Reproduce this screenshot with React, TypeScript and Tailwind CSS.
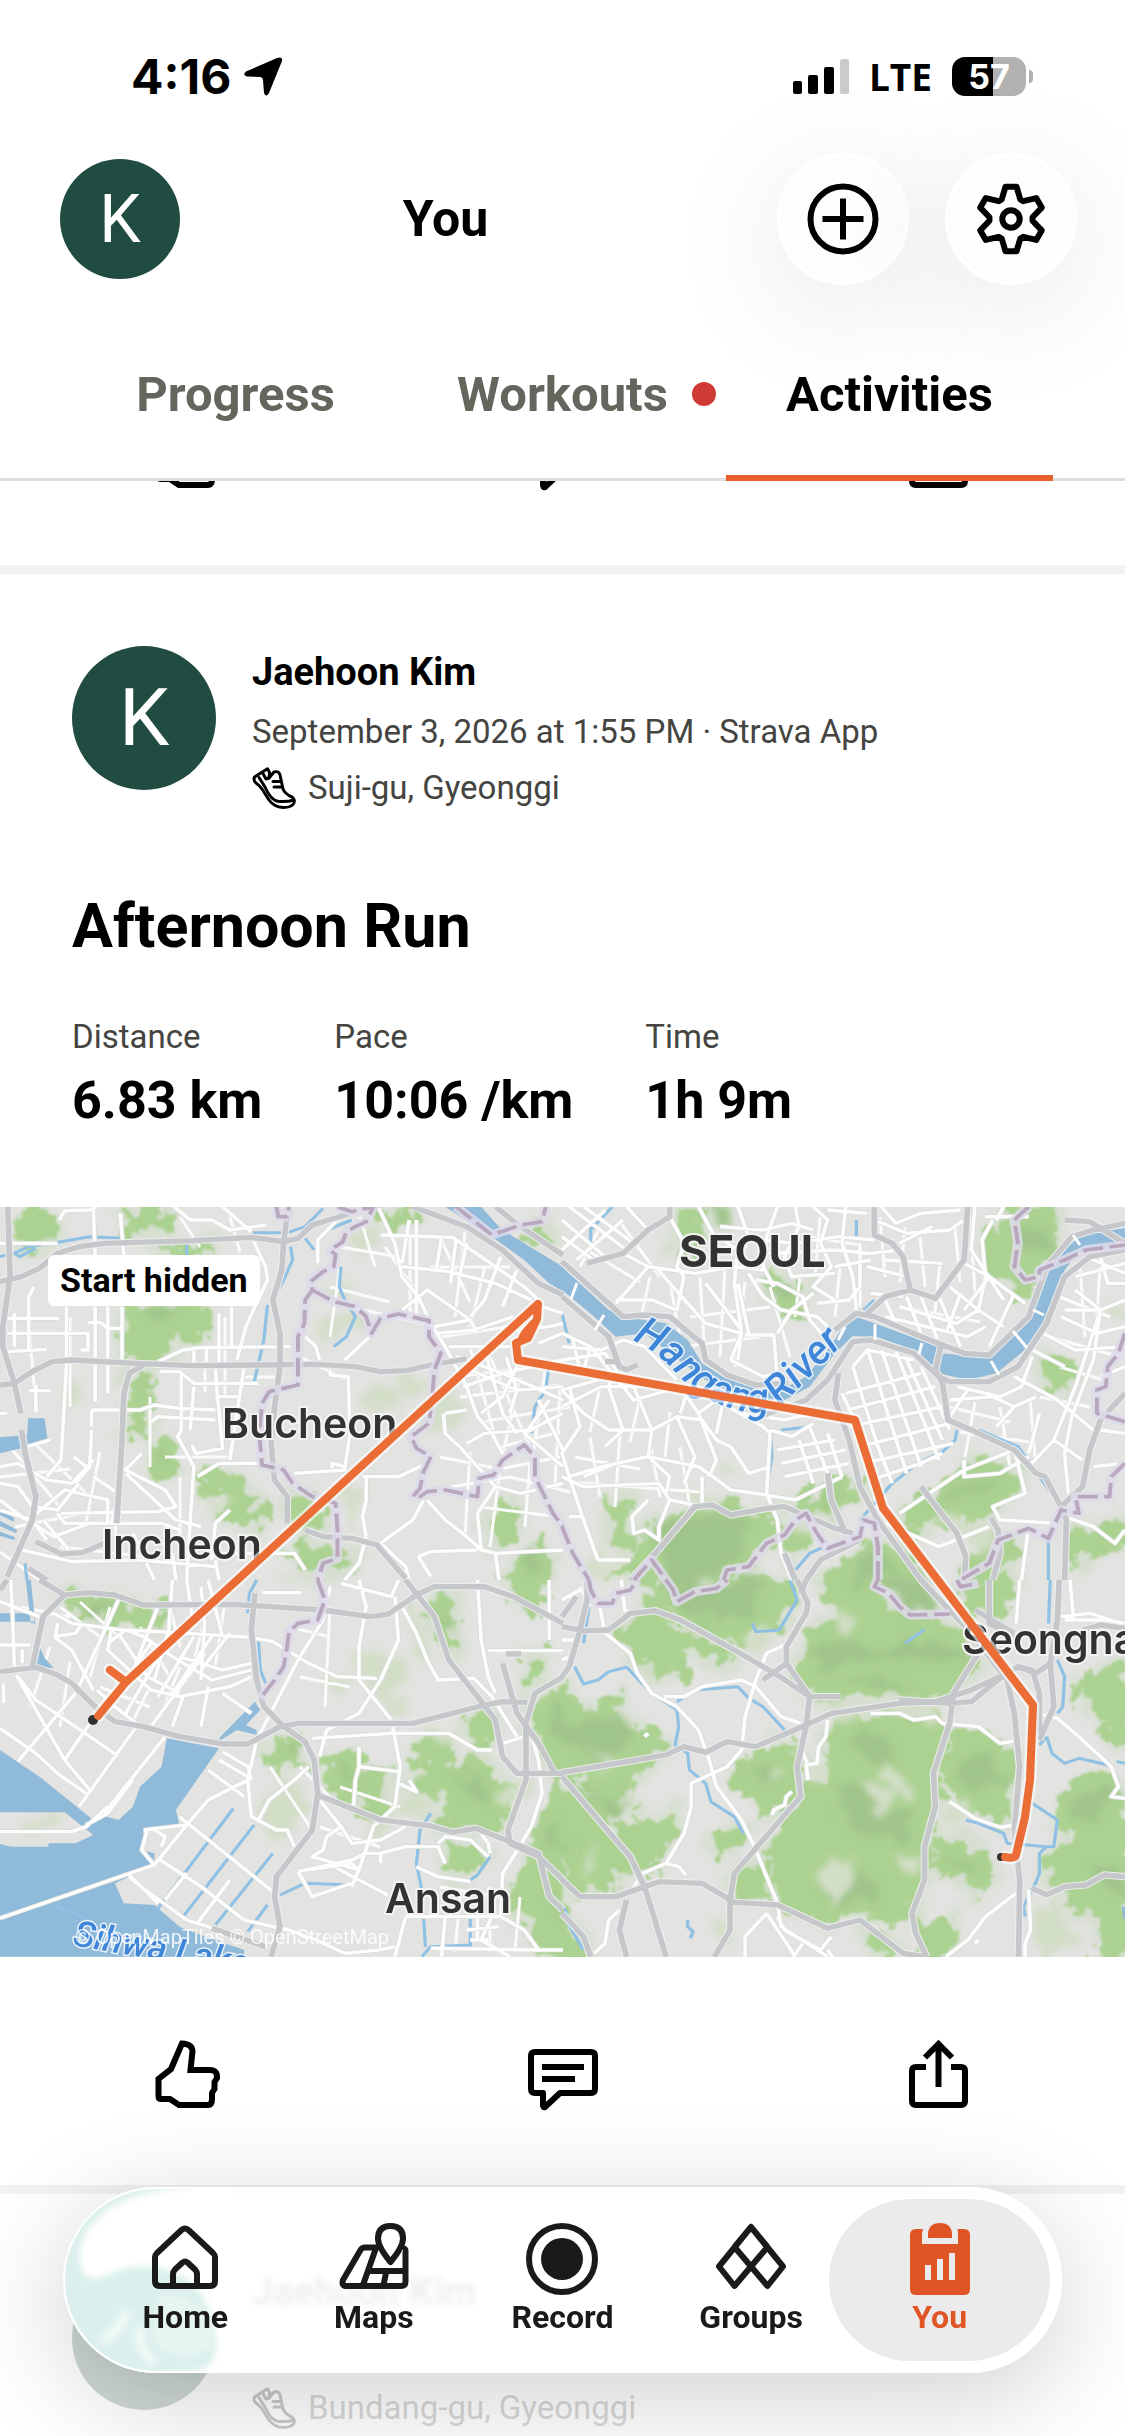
import React from 'react';
import { clsx, type ClassValue } from 'clsx';
import { twMerge } from 'tailwind-merge';

function cn(...inputs: ClassValue[]) {
  return twMerge(clsx(inputs));
}

/* ---------- icons ---------- */

const stroke = {
  fill: 'none',
  stroke: 'currentColor',
  strokeWidth: 6,
  strokeLinejoin: 'round' as const,
};

const LocationIcon = () => (
  <svg viewBox="0 0 40 40" className="w-10 h-10" fill="currentColor">
    <path d="M39 4 L26 36 Q23 41 21 36 L20 23 Q20 20.500 17.500 20 L4 19.500 Q-1 18 3 14.500 L34 1 Q40 -1 39 4Z" />
  </svg>
);

const SignalIcon = () => (
  <svg viewBox="0 0 56 36" className="w-14 h-9" fill="currentColor">
    <rect x="0" y="22" width="9" height="13" rx="2" />
    <rect x="15" y="16" width="10" height="19" rx="2" />
    <rect x="31" y="8" width="10" height="27" rx="2" />
    <rect x="47" y="0" width="9" height="35" rx="2" fill="#cbcbcb" />
  </svg>
);

const PlusCircleIcon = () => (
  <svg viewBox="0 0 72 72" className="w-[72px] h-[72px]" {...stroke}>
    <circle cx="36" cy="36" r="32.500" />
    <path d="M36 15.500V56.500M15.500 36H56.500" />
  </svg>
);

// one tooth, repeated every 60 degrees
const TOOTH = [[-9.3, -19.5], [-5.5, -32.3], [5.5, -32.3], [9.3, -19.5]];
const GEAR = Array.from({ length: 6 }, (_, i) => {
  const a = (i * Math.PI) / 3;
  return TOOTH.map(([x, y]) => `${36 + x * Math.cos(a) - y * Math.sin(a)},${36 + x * Math.sin(a) + y * Math.cos(a)}`);
}).flat().join(' ');

const GearIcon = () => (
  <svg viewBox="0 0 72 72" className="w-[72px] h-[72px]" {...stroke}>
    <polygon points={GEAR} />
    <circle cx="36" cy="36" r="8.700" />
  </svg>
);

const ThumbIcon = () => (
  <svg viewBox="0 0 72 72" className="w-[72px] h-[72px]" {...stroke}>
    <path d="M30 4.500 L19 30 L6.500 40 V57 Q6.500 60 9 60 H18 L27 66 H56 Q60 66 60 60 V54 L62.500 50 V43 L65 39 Q65.500 31 58 31 H38.500 L40.500 12 Q40 5 30 4.500Z" strokeLinejoin="miter" />
  </svg>
);

const CommentIcon = () => (
  <svg viewBox="0 0 72 72" className="w-[72px] h-[72px]" {...stroke}>
    <path d="M8 13 H64 Q68 13 68 17 V50 Q68 54 64 54 H33 L18 68 Q16 69 16 66 V54 H8 Q4 54 4 50 V17 Q4 13 8 13Z" />
    <path d="M15 28H57M15 40H48" />
  </svg>
);

const ShareIcon = () => (
  <svg viewBox="0 0 72 72" className="w-[72px] h-[72px]" {...stroke} strokeLinejoin="miter">
    <path d="M24 28 H14 Q10 28 10 32 V62 Q10 66 14 66 H59 Q63 66 63 62 V32 Q63 28 59 28 H49" />
    <path d="M36.500 5V48M23 18.500L36.500 5L50 18.500" />
  </svg>
);

const ShoeIcon = () => (
  <svg viewBox="0 0 44 42" className="w-11 h-[42px]" {...stroke} strokeWidth={3} strokeLinecap="round">
    <path d="M2.500 10 L15.500 1.800 L17.500 5.500 L17 11 L22 5 Q27 3.500 28 8 L31 22 Q33 27 40 30 Q43 32 42 36 Q40 40.500 31 40.500 Q22 40 17 33 L10 22 Q7 18 4 16 Q1 13 2.500 10Z" />
    <path d="M7 10.500 L13 20 Q19 34 27 34.500 Q36 35 42 33M11 6.500L14 12L17 11M21 14.500H28M22 20H29.500" />
  </svg>
);

const HomeIcon = () => (
  <svg viewBox="0 3 72 72" className="w-[72px] h-[72px]" {...stroke}>
    <path d="M32.500 10 Q36 7 39.500 10 L64 33 Q66 35 66 37 V61 Q66 66 61 66 H11 Q6 66 6 61 V37 Q6 35 8 33Z" />
    <path d="M24 66 V54 Q24 51.500 26 49.500 L33.500 42.500 Q36 40.500 38.500 42.500 L46 49.500 Q48 51.500 48 54 V66" />
  </svg>
);

const MapsIcon = () => (
  <svg viewBox="0 3 72 72" className="w-[72px] h-[72px]" {...stroke}>
    <path d="M40 27.500 H27 Q24 27.500 22.500 30 L5 60 Q3 66 9 66 H63 Q67.500 66 67.500 61.500 V31 Q67.500 28.500 65 28.500" />
    <path d="M38 28L25 65M32 51H67M48 53L45.500 65" />
    <path d="M52.500 42 Q40 27 40 18.500 Q40 6 52.500 6 Q65 6 65 18.500 Q65 27 52.500 42Z" fill="#fff" />
  </svg>
);

const RecordIcon = () => (
  <svg viewBox="0 3 72 72" className="w-[72px] h-[72px]" {...stroke}>
    <circle cx="36" cy="39" r="33" />
    <circle cx="36" cy="39" r="21" fill="currentColor" stroke="none" />
  </svg>
);

const GroupsIcon = () => (
  <svg viewBox="0 3 72 72" className="w-[72px] h-[72px]" {...stroke} strokeWidth={6}>
    <path d="M52.500 27 L36 7 L4 46.500 L19.500 66 L52.500 27M19.500 27 L36 7 L68 46.500 L52.500 66 L19.500 27" />
  </svg>
);

const YouIcon = () => (
  <svg viewBox="0 3 72 72" className="w-[72px] h-[72px]" fill="currentColor">
    <path d="M12 9 H19 Q18 12 18 15 V24 H54 V15 Q54 12 53.500 9 H60 Q66 9 66 15 V69 Q66 75 60 75 H12 Q6 75 6 69 V15 Q6 9 12 9Z" />
    <path d="M24 18 V15 Q24 3 36 3 Q48 3 48 15 V18Z" />
    <path d="M21 45H27V60H21ZM33 39H39V60H33ZM45 33H51V60H45Z" fill="#ebebeb" />
  </svg>
);

/* ---------- route map ---------- */

interface Tile {
  x: number;
  y: number;
  forest: string;
  shade: string;
  meadow: string;
  water: string;
  stream: string;
  street: string;
  highway: string;
  border: string;
}

// four vector tiles, each in its own 1568-wide grid
const TILES: Tile[] = [
  {
    x: 0,
    y: -7,
    forest:
      'M40 60L90 25 140 40 162 80 150 110 100 125 40 120ZM345 40L480 30 460 90 440 75 420 100 400 85 375 105 350 95 365 70ZM440 140L590 135 580 160 480 165ZM400 320L580 320 560 370 575 410 520 390 480 410 460 470 420 485 400 470 380 485 370 450 350 470 345 380 370 340ZM370 510L410 530 405 570 430 610 400 640 430 660 390 705 360 690 375 640 360 600ZM415 735L485 740 480 770 500 800 470 825 420 810ZM555 830L600 820 660 830 690 900 735 930 725 975 690 945 660 965 620 955 650 900 640 870 600 850 560 865ZM810 905L870 910 900 990 860 985 815 960ZM805 1050L860 1020 900 1070 980 1040 990 1080 940 1120 900 1080 880 1120 830 1100ZM1370 960L1400 905 1430 900 1425 980 1400 1030 1365 1000ZM1070 25L1175 40 1165 60 1120 60 1090 90ZM1470 85L1500 80 1545 100 1530 130 1490 110ZM1430 1100L1500 1070 1490 1040 1530 1030 1540 1080 1500 1140 1420 1130Z',
    shade: 'M400 340L500 330 480 370 420 380ZM380 540L400 560 390 600ZM430 740L480 745 460 760ZM1460 1100L1520 1080 1500 1130Z',
    meadow:
      'M980 110L1060 90 1010 165ZM860 370L990 330 1010 380 890 430ZM1000 560L1100 540 1090 620 1000 630ZM180 560L240 530 250 620 190 610ZM560 870L640 880 620 950ZM940 880L1000 860 980 1000ZM1200 570L1290 610 1240 720 1190 690ZM1090 520L1180 530 1120 640ZM890 250L970 240 960 300Z',
    water: 'M78 655H124L132 715 60 745 0 760V712L76 705ZM1240 20H1340L1390 80 1430 110 1568 200V275L1530 250 1460 180 1370 110ZM0 925L40 955 38 965 0 945ZM0 962L48 990 45 1000 0 978ZM0 995L42 1012 40 1020 0 1008Z',
    stream:
      'M0 170L40 160 80 140 170 125 250 110 340 115M40 160L55 170 100 145M705 98L800 98 850 80 900 25M810 140L815 180 790 240 770 280M745 315L735 420 720 490 708 545M950 200L945 260 960 300 990 350 965 410 930 440M850 115L875 150M520 135V165M1530 490L1520 570 1490 620 1480 700M910 90L980 60M70 1090L75 1140',
    street:
      'M0 130H160M165 60L180 32 250 30 270 20M260 20L265 165M335 40L345 165M20 355H165M20 400H245V450H225M40 340V440M95 260L80 290V450M20 455L130 448M185 320V500L170 780 130 830M245 368H280L300 385H340M265 320V605M255 630V680M300 320V580M255 630H390L430 615 500 625 600 630M255 690L250 800 210 850M340 320V480M80 572H140M100 555V635M440 485L510 450 560 443 810 440M445 515H500L540 550 720 550M505 520V690L495 710 540 800 530 960M540 560L530 690M600 590H670M610 340V490M645 320V440M700 110L740 200 745 240 710 320 685 380 660 480M680 500L660 640 640 780M420 665L440 650 600 660M600 500L605 580 620 745 545 760 535 735M540 440V495M575 440V495M350 820L430 900 490 960 560 980M395 760L350 810 460 870 490 920 440 935 170 940M550 830L610 790 740 790M640 930L600 970 590 1080M820 820L960 810 975 700 970 530 920 525V510M925 805V790L960 800M1010 830H1110L1190 790M1020 830V900L1010 950 1020 1010M850 410L880 440 890 480M960 480L1030 410M485 20L530 60 590 60 640 90 740 75M620 20L700 95M885 190V120L940 60M1055 25L1100 130 1120 230 1165 290 1200 370 1240 440 1300 560 1330 650 1370 700 1410 780M1060 105L1260 112 1340 170 1460 260 1500 300M1160 60V350M1140 60L1120 190M1120 200L1250 215 1380 250 1480 300M1230 110L1215 210M1270 120L1255 250M1300 130L1280 230M1395 170L1350 300 1310 350M1440 210L1400 320M1120 330L1190 270 1310 360 1330 400M1210 380L1310 360M1215 400L1320 390 1430 350M1250 440H1420M1270 470L1400 520 1568 600M1310 510L1440 570 1568 560M1290 560L1400 520 1568 480M1350 450L1400 640 1440 700M1440 500L1400 590 1340 640M1530 600L1470 690 1350 700 1300 730M1240 640L1300 630M1235 640L1240 700 1280 740 1380 860 1450 880 1568 850M1500 600L1568 750M1568 640L1460 700 1568 800M1180 900L1150 960 1060 1030M1190 900L1240 960 1300 1010 1340 1050 1380 1060 1568 1050M1165 1070L1200 1055 1330 1050M1165 1070L1200 1130M1380 860L1330 940 1340 1050M1380 1060L1390 1140M0 800L50 790 130 840 200 850 260 780M0 850L50 860 90 920 160 930 220 850M0 900L60 950 150 1010 250 970M80 960L180 870 300 900 300 970M205 770L240 800M260 830L330 880 310 970M60 1050L200 1085 380 1080 600 1100M160 940L180 970 330 970H450L500 990M370 1000L430 1140M480 1060L490 1140M530 960L520 1140M600 1080L610 1140M560 1060H820L850 1110M0 930L90 960 130 1020 M120 960L200 1060M0 640H20M60 745L140 720M1060 1030L1130 1100 1140 1140M1020 1010L1000 1090 960 1140M1440 390L1530 380 1568 370M1510 320L1568 340M1500 430L1568 400M1410 470L1440 570 1420 640',
    highway:
      'M22 20L28 230 8 380V440L40 550 58 640M60 690L70 760 100 890 90 960 20 1130M0 245L60 230 110 205 160 160 220 140 290 130 540 122 700 112 790 125 830 115 870 75 970 42M0 555L40 550 90 515 145 485 200 480 380 490 540 497 880 493 990 500 1060 515 1130 512 1200 495 1300 477M400 495L360 520 345 580 340 720 325 970M800 50L790 125 785 210 760 300 780 400 780 500 765 620 755 730 765 840 800 890V970M850 990L900 1010 980 1015 1050 1035 1130 1135M100 1025L170 1062 230 1058 290 1030M1150 20L1300 80 1400 150 1500 250 1568 285M1380 20L1450 80 1568 165M80 1105L130 1140',
    border:
      'M770 20L775 50 800 50 805 20M940 20L980 35 1040 20 1020 65 990 80 965 95 955 125 920 150 935 165 930 200 900 215 865 245 870 270 850 300 848 370 830 410V555L750 575 730 610 722 700 730 795 790 810 815 850 870 890 935 910 940 990V1075L900 1090 885 1140M870 270L930 305 990 320 1020 350 1035 400 1060 355 1110 342 1195 362V410L1228 460 1210 510 1205 580 1195 670 1145 710 1160 745 1200 770 1178 820 1170 865 1150 890 1170 890 1190 875 1240 870 1330 890 1335 835 1375 825 1400 780 1460 735 1490 770V830L1540 940 1568 980M1270 20L1370 105 1450 75 1510 65 1520 20',
  },
  {
    x: 562,
    y: -7,
    forest:
      'M310 40L400 25 380 100 365 180 320 100ZM580 235L630 240 640 280 680 240 650 300 665 350 620 340 590 290ZM1240 60L1290 25 1360 50 1380 110 1330 200 1290 290 1240 240 1190 200 1190 130 1210 80ZM1355 490L1395 487 1430 520 1415 580 1340 545ZM150 900L200 900 180 950 205 990 190 1060 130 1020ZM650 900L760 850 820 840 840 880 770 920 760 970 690 920 640 930ZM945 950L1100 820 1140 790 1270 800 1275 870 1180 940 1120 950 1010 990ZM220 1000L330 960 430 910 600 940 620 1000 560 1040 480 1140H130L210 1090ZM600 1010L650 990 680 1060 620 1060ZM760 1140L800 1060 860 1040 940 1040 1010 1140ZM1430 990L1470 1000 1530 960 1568 980V1030L1480 1060 1430 1090ZM1120 1080L1200 1010 1280 1000 1230 1100 1200 1140H1120ZM1240 20H1350L1390 60 1300 50Z',
    shade: 'M400 20H460L470 70 410 70ZM230 1010L420 960 560 960 500 1060 400 1140H300ZM1280 60L1350 70 1340 160 1280 150ZM1020 900L1130 840 1240 830 1180 880ZM690 890L780 860 760 920ZM800 1090L900 1060 960 1140H800ZM590 240L620 250 630 310 600 290Z',
    meadow: 'M330 860L420 870 430 920 360 910ZM440 770L480 800 460 860ZM1030 980L1180 950 1200 1040 1110 1010ZM620 980L700 960 740 1030ZM1530 310L1568 320V370L1530 350ZM80 1080L130 1050 130 1140H80ZM280 130L330 120 300 180Z',
    water:
      'M0 200L40 240 130 330 200 355 290 370 350 420 390 490 450 530 560 570 600 575 680 530 740 450 790 370 820 350 870 370 1050 440 1060 460 1190 475 1250 400 1320 320 1340 240 1380 170 1450 100 1568 85V140L1440 155 1400 210 1370 310 1300 440 1210 520 1130 540 1050 520 990 455 880 412 810 408 760 460 690 560 620 600 520 600 400 540 300 460 230 400 150 410 90 350 0 270Z',
    stream:
      'M80 60V150M140 20L80 90M580 690L585 770 570 860M1100 690L1095 720 1060 755 990 790 920 850 830 960M1160 690L1270 740 1390 920M1355 1020V1140M0 340L20 430M650 1110L690 1060 730 1040M820 60V120M610 690L690 680M870 300L840 330',
    street:
      'M0 60L120 170M20 20L180 150M60 20L200 130M0 110L100 190M0 150L120 30M40 180L170 60M170 160L240 200 370 220 480 200 560 210M180 20L240 90M300 50L340 130 320 200 340 230M380 20L420 100 490 150 480 250 500 400 490 480M490 20L520 110 500 170M240 200L150 310 M260 200L350 310 400 370 500 400M340 230L320 330 250 300 150 300M400 250L500 390M440 80L560 90 640 70 700 90M600 20L570 110 560 200 590 260M650 20L660 80 620 170 640 230 760 220M700 20L740 60 720 130 750 200 700 260 760 300M560 120L650 130 770 110 870 120M570 160L760 150 860 160 940 150M790 20L780 130 810 230 820 330M830 130V260L800 300 710 310M740 30L850 40M860 180L760 200M850 200L960 230M520 220L560 290 610 330 710 350 750 390M540 240L600 250 670 290 690 360 740 420M500 400L470 480 560 530 600 520M510 405H590L600 540M600 400L640 330 700 280M490 250L520 400M870 60L960 100 1080 90 1120 60M890 20L930 70 1000 40 1110 30M940 130L1030 80M900 180L1060 190M860 280L950 290M900 300L930 370M960 290L1000 400M1000 290L1050 430M1050 290L1110 440M900 350L1130 410 1180 380M940 320L1100 370 1160 330M1080 260L1160 330 1230 380M1120 190L1190 230 1290 310M1150 20L1140 150 1230 300M1180 50H1300M1200 60L1170 120 1180 230 1160 330M1110 280L1070 400M1190 230L1120 330M1260 280L1190 440M1230 20L1210 60M1460 170L1568 220M1430 230L1568 190M1500 170L1520 250 1568 250M1430 270L1500 330 1480 480M1400 330L1500 330 1568 300M1390 350L1490 400 1568 380M1340 400L1430 450 1568 440M1310 450L1400 500M1260 530L1380 600 1490 700M1310 470L1280 560 1220 590 1100 560M1430 560L1370 720 1300 800M1480 480L1420 650 1400 760 1410 880M1500 330L1430 560M1568 500L1500 530M1080 600L1200 590 1260 620 1320 590M1130 570L1080 650M1260 620L1210 680M1330 640L1300 760M1370 720L1450 780M1500 690L1568 700M1480 800L1568 790M810 500L850 450 980 480M790 580L1000 520M795 630L1040 560M800 680L1060 620M830 740L1080 670M840 790L1090 730M860 840L1000 790 1060 760M850 445L960 820M890 450L1000 800M930 455L1050 780M960 480L1060 720M1000 500L1080 690M810 500L880 740 920 850M780 580L850 740M940 940L1120 810 1260 750 1290 880 1200 920 1220 960 1380 970M1120 780V830L1220 820 1300 770M0 440L110 450 170 420 230 440 320 540M0 480L120 460 150 510 130 560M0 400L80 440 60 510M30 420L50 510M80 440L200 600 300 570M100 540L0 570 60 640 130 690 250 690 320 650 390 660 430 720 470 740 520 820 580 800M0 620L110 560 230 560M20 560L50 680 0 760 20 830 110 800 240 770 380 800 420 830 470 870 540 880 650 900 780 830M130 560L170 690 120 740M200 560L250 690 240 770M110 800L20 830 60 960 100 1080M0 830L60 860 270 850 300 900 270 980 270 1020 230 990 200 1000 195 950 240 900M60 830L150 790M240 770L300 830 290 880M320 650L370 770 340 850M330 560L380 640 430 600 560 680 580 700M350 570L330 640M380 640L430 780 410 830M450 600L430 700M500 640L620 660 700 640M580 690L570 880 600 960 610 1060 640 1140M580 690L640 710 700 670M600 750L760 720M610 790L790 750M620 830L800 790M690 680L740 820M660 720L700 850M740 700L780 830M390 830V910M20 950H60M100 1080H190M300 900L390 920M1568 990L1540 1030 1480 980 1400 950M900 970L1050 1040 1190 980M1300 980L1290 1060 1280 1140',
    highway:
      'M0 185L140 320 170 350 230 345 300 350 390 430 400 480 460 525 540 555 630 550M0 290L130 410 160 500 180 510 210 495M120 485H150M550 650L680 600 740 540 810 425 860 420 980 460 1050 530 1080 545 1190 545 1270 500 1350 370 1400 230 1470 170 1568 150M760 390L820 340 870 350 1000 410 1120 460 1190 465 1300 350 1350 200 1420 110 1480 90 1568 70M70 190L170 160 240 90 300 50V20M870 20V105L920 130 950 170 970 270 1040 295 1120 180 1130 20M970 270L900 290 850 340M1055 440L1040 510 1060 550 1075 660 1140 690 1260 750 1320 820 1345 830 1390 920 1405 960 1400 1140M1390 920L1450 860 1470 750 1500 660 1568 580M770 520L760 600 800 720 830 860 880 960 1000 1140M740 820L750 900 790 1000M190 1140L260 1060 370 920 420 915 470 945 570 925 620 920 760 985 810 1000M1000 860L1100 1000 1125 1070 1120 1140M1195 955L1215 990 1220 1060 1200 1140M680 1140L720 1080 830 1020M620 1060L650 1140M1400 60L1470 65 1568 130',
    border:
      'M1300 20L1260 60 1270 130 1260 200 1290 240 1330 230V210L1400 180 1460 150 1568 135M1568 400L1550 460 1520 500 1515 560 1490 570V640L1568 665M1568 790L1530 830 1525 890 1430 890 1440 940 1390 930 1355 1015 1300 985 1215 1020 1190 1090 1110 1140M880 1140V1040L870 970 840 960 830 1010 740 1045 710 1000 680 940 650 960 620 1005 570 1030 520 1100 460 1110 450 1140M0 980L30 1060 75 1140M200 1140L250 1080 290 1140',
  },
  {
    x: 0,
    y: 373,
    forest:
      'M180 70L240 50 340 70 460 95 455 140 380 140 310 125 280 100 230 115 215 80ZM1210 40L1250 40 1260 120 1280 200 1250 210 1210 140ZM1400 0H1500L1510 60 1480 90 1420 30ZM1460 230L1530 230 1520 300 1470 310ZM740 520L780 480 830 475 830 500 850 550 810 545 780 565ZM895 560L960 540 985 530 1000 570 1050 560 1100 580 1075 620 1080 690 1060 710 1020 690 1000 650 960 660 940 620 920 610ZM1140 520L1170 490 1200 480 1250 500 1240 570 1280 580 1330 545 1390 600 1430 620 1420 680 1400 750 1330 740 1240 750 1210 720 1260 680 1240 640 1200 650 1150 610 1180 570ZM1310 420L1340 390 1375 410 1370 500 1330 500ZM1240 850L1260 800 1350 820 1310 880 1265 890ZM1490 360L1568 320V600L1530 570 1480 440ZM1480 780L1520 700 1568 620V1130H1500L1490 1050 1430 980 1430 900 1490 850Z',
    shade: 'M760 510L830 490 820 530ZM960 560L990 550 1000 620 970 630ZM1250 600L1330 570 1350 640 1290 660ZM1520 380L1568 350V500ZM1510 760L1568 700V860ZM1230 60L1250 130 1240 170ZM1530 950L1568 980V1060ZM240 70L310 80 260 95Z',
    meadow:
      'M1120 60L1190 140 1210 260 1160 200ZM1000 240L1150 210 1160 280 1060 350 1010 330ZM880 300L990 310 960 360 890 340ZM700 640L780 600 870 620 860 700 760 770ZM1100 650L1200 640 1200 720 1090 700ZM1070 320L1140 360 1130 420 1090 390ZM1180 440L1290 430 1300 480 1200 470ZM1000 750L1080 720 1060 790ZM70 705H145V745H70ZM1360 620L1470 600 1430 700ZM770 0H820L800 20Z',
    water:
      'M0 510L110 590 260 720 290 708 330 720 370 680 390 620 450 560 465 475 610 505 490 690 500 735 400 750 395 810 430 820V855L320 910 345 970 430 975 500 1040 560 1065 680 1110V1130H0ZM0 697H180L260 765 210 790 135 790V800H30L0 792ZM610 475L710 365 725 390 685 435 715 450 715 465 660 450 615 480ZM110 200L125 235 150 265 100 258ZM0 100H95V125H0ZM72 0H86L98 130H86Z',
    stream:
      'M650 685L440 985M708 735L510 1010M760 820L600 1035M745 975L690 1055M1200 700L1170 750 1160 850 1175 930 1185 1100M1365 830L1330 885 1310 900M1310 1000V1100M780 945L850 910 980 915M720 185L725 270 740 310M690 100L695 40 715 0M1175 1130L1200 1100 1310 1095M820 800L800 750M150 975L250 1020',
    street:
      'M0 65L50 85 110 110 150 100 200 130 340 150 440 155 700 172 760 185 860 250 940 290 1050 295M30 0L35 110 40 260M0 195H85M62 210V250M150 170L210 160 230 130M330 60L220 320M150 170L200 210 260 330M155 170L160 130M440 80L350 330M480 0L470 150 430 300M520 0L540 140M560 20L570 130 560 300M580 0L620 170M730 38H840M310 150L300 210 350 260 420 330 500 350 640 320 700 290M300 190L350 150 400 170 480 230 590 300 700 270M330 160L410 290 500 340M590 170L480 340M570 220L420 440M470 180L350 400M540 170L440 350M420 190L350 300 M500 230L620 270 700 250M640 160L560 270 M510 350L480 440M580 320L560 440M620 340L700 400M270 330L320 380 380 430M270 400L180 540M210 340L50 545M380 440L220 680M460 470L290 700M45 285L180 540 250 630M50 290L100 360 210 440 325 525M0 445L100 520 160 580 240 640M10 310V370M240 735L300 700 370 600M0 755H200L240 740 300 680M0 1015L430 855 520 735 580 660 690 600 715 480 830 240 900 120 920 20M620 515L690 560 700 600M610 540L690 590M580 570L680 650M500 710L760 935M440 835L560 920 680 1020 840 1060M360 890L380 910 520 1020 700 1080M360 885L440 970M460 960L520 880M550 1030L640 900M430 750L460 770 450 800M400 750L480 740 520 735M690 600L700 710 770 750 800 750 820 800M860 560L820 600 750 660 720 720M430 855L395 810 410 750M950 10L1090 50 1110 0M1000 0L1020 80 1000 200V300L1090 420 1115 560 1100 680 1040 740 1000 870 980 920M1120 80L1160 160 1190 240 1220 300 1320 295 1370 350 1440 470M1100 50L1110 180 1060 300 1000 400 910 450 890 530M870 475L1090 460 1250 460 1330 510 1370 510M1330 0L1340 180 1360 290 1380 340M1360 212H1568M1530 0V180M1000 500V560L990 600 985 680M1000 560L1110 575M1110 610L1160 635 1140 600M890 660L950 740 980 790 1060 780 1130 740M950 740L910 770 900 810 870 830 1000 870M830 875L980 840 1020 820 1060 820M830 875L870 950 980 910M1000 870L980 850 860 870M930 860L1080 945M1060 850V820L1130 800 1220 800 1240 850M1220 790L1240 770 1310 780 1360 830M1160 860L1220 890 1310 905M1330 745L1360 790 1365 820M1400 490L1460 470M1470 430L1500 540 1510 640 1480 740 1430 830 1400 880 1395 1010 1460 1050 1500 1110 1568 1110M1130 1010H1240L1390 1010M1130 1010L1100 1130M1240 1010L1230 1130M1300 1050L1390 1040M1310 1080H1360M1330 1010L1330 1080M1370 1010L1340 1080 1420 1130M1200 1105L1500 1110M1060 1110L1100 1100M780 1040L880 1080 960 1120 1060 1110',
    highway:
      'M0 275L100 262 160 285 200 310 270 385 320 425 400 440 500 470 620 492 690 492 780 440 830 430 1150 430 1340 378 1400 365 1468 367M90 260L120 110 180 45 250 38 320 45 400 75 650 73 900 90 1030 110 1080 103 1160 45 1210 20 1350 20 1430 50 1568 130M110 0L180 45M710 40L700 150 715 300 735 380 790 440 850 485 875 540 885 640 870 750 770 890 765 950 780 1040 755 1130M885 645L1060 720 1200 738 1260 757 1325 745 1420 785 1500 820 1530 950 1568 990M1130 0L1210 110 1250 240 1330 350 1380 420 1400 530 1440 580 1568 580M1400 250L1440 400 1500 490 1545 580M1568 290L1490 340 1465 430V600L1415 750 1420 790 1500 830 1568 900M590 1045L740 1100M1410 222H1452M0 30L20 0',
    border: 'M885 0L905 60 885 120 830 130 805 155 800 200 790 260 765 300 725 355',
  },
  {
    x: 562,
    y: 373,
    forest:
      'M280 0H640L650 50 600 140 540 160 500 200 470 170 400 150 330 110 240 90ZM170 150L220 110 270 110 400 180 480 215 480 260 420 240 380 200 340 220 330 290 260 300 210 230ZM730 20L780 0 880 10 900 60 980 120 1080 120 1160 250 1140 290 1090 340 1000 360 900 340 760 360 700 340 650 260 690 210 690 150 780 130ZM0 360L60 370 80 390 160 340 140 400 160 450 260 460 300 500 240 520 240 580 200 580 190 640 130 700 50 600 0 570ZM0 590L110 690 180 760 220 800 200 820 180 850 150 920 130 890 100 930 50 930 20 900 30 830 0 800ZM140 740L200 740 210 680 230 740 320 690 280 860 220 880ZM480 540L600 500 660 520 650 640 560 720 540 660 480 620ZM680 620L760 560 740 480 760 420 900 400 1070 430 1060 500 1030 580V680L1010 800V900L980 960 970 1020 900 1000 850 1010 770 1020 740 1040 620 980 590 880 560 820 640 720ZM1090 450L1200 490 1250 500V720L1200 740 1160 700 1080 640 1050 620ZM1040 750L1100 780 1200 860 1180 950 1130 900 1020 860ZM480 890L560 860 580 960 480 960ZM420 760L480 735 510 780 470 800 430 830ZM1430 320L1568 240V500L1510 450 1480 380ZM1390 640L1480 590 1568 640V1140L1480 1130 1540 1060 1400 950 1340 830 1440 770 1380 740ZM980 1030L1090 1020 1060 1130 1000 1120ZM850 1060L920 1080 900 1130ZM1110 30L1240 0 1250 80 1190 110ZM0 1050L60 1100 70 1140H0Z',
    shade: 'M320 0L560 10 520 80 420 130 330 80ZM700 200L880 200 1060 180 1130 240 1000 260 800 240 720 280ZM910 30L1000 0 1060 90 980 100ZM760 620L860 640 980 720 960 800 860 760 770 690ZM0 420L150 440 200 470 100 540 0 500ZM30 600L130 650 200 640 130 690ZM780 480L860 440 940 520 860 540ZM1420 640L1520 620 1500 720 1420 720ZM500 580L600 540 590 620ZM700 900L860 880 900 960 780 980ZM1450 850L1568 860V960ZM1110 520L1200 520 1220 640 1130 620ZM740 290L900 300 1000 330 860 320ZM1060 790L1160 860 1120 870Z',
    meadow:
      'M520 150L560 130 600 180 560 220ZM780 80L830 110 800 200 780 150ZM880 560L900 520 950 600 990 660 960 680 940 640 870 680 830 620 920 630ZM740 850L770 880 800 850 780 930 760 1000 740 920 700 900ZM740 370L1060 380 1060 420 900 395 760 400ZM1050 700L1130 650 1150 720 1080 740ZM650 500L740 560 700 600ZM400 1000L480 1000 470 1110 430 1060ZM940 840L1000 850 970 900ZM1300 1000L1400 980 1440 1100 1320 1120ZM50 480L130 540 80 640 110 560ZM60 820L100 780 80 880ZM600 560L640 590 560 620ZM400 60L380 20 400 0 430 20Z',
    water: 'M1560 980H1568V1020L1562 1010Z',
    stream:
      'M635 0L655 60 605 150 540 155 530 130M35 260L60 312 100 300 130 275 180 262 250 340 320 390 325 440 315 495 350 520 355 570 400 610 415 665 480 710 505 760M320 365L370 330 490 320 520 355 560 380 620 450M75 80L60 190M955 190L1010 148M1360 0L1355 130M1380 240L1400 290 1395 380 1380 400M1350 470L1365 520 1400 550 1440 535 1520 555M1330 495L1350 470M1125 720L1160 730 1230 760 1240 790 1350 800 1330 820 1330 880 1315 920 1285 980 1290 1010M1310 670L1380 720 1370 800 1340 800M350 1020V1040L365 1055 358 1075M5 980L15 1005M1568 550L1545 545M0 1000L60 1110',
    street:
      'M0 60L50 30M105 80L120 160 190 220 210 280 250 340 320 380 380 450 410 540 430 620 500 720 540 810 600 970 610 1040 740 1130M285 350H340L390 320 500 300 540 320 610 410 665 430M620 195L570 220 540 300 510 410 500 510 460 560 420 580 360 610V680L340 760 290 850 225 880 200 920M290 850L325 860 345 885M740 420L735 470 715 500 710 550 680 555 685 600M670 515L685 555M640 635L625 650 620 675 590 690 585 705M860 400L940 400 980 420 1040 410 1060 430 1160 440 1220 490 1265 482M1080 665L1150 715 1220 742 1265 735M570 1000L510 1070V1130M570 1000L650 1130M600 1010L620 1050 720 1110 750 1070M670 1090L640 1140M740 1110L760 1140M1265 940L1180 1010 1130 1080 1070 1130M1300 930L1305 1050 1290 1090V1130M1275 0L1265 130M1340 405L1380 415 1450 480 1530 560 1550 620 1530 650 1568 655M1415 0L1425 120M1400 120H1520L1568 130M160 990L130 1020 120 1090 90 1120M1450 480L1520 550M1150 1090L1160 1080M165 0L175 90 190 100M0 180H40M230 470L240 460M0 240L20 230M1390 110L1470 100 1530 120',
    highway:
      'M0 140L60 152 130 150 190 100 260 92 330 120 480 210 600 285 690 350 775 350M940 360L1080 370 1140 365 1220 295 1270 260 1320 280 1360 250M70 0L70 60 45 170 20 260 0 290M0 110L40 50M655 0L685 70 680 100 625 200V250L690 350 680 440 655 560 665 650 600 730 480 880 468 960V1050L425 1130M560 300L625 250M680 0L665 40M0 578L290 525 340 500 400 517 460 485 540 500 680 435 750 400 940 370 1040 365 1140 330 1220 290M1160 220L1090 340 1080 430 1035 580 1040 680 1010 800V900L975 1000 985 1060 1015 1130M0 590L110 730 190 830 230 920 290 1130M0 900L50 950 150 950 270 905 390 910 480 967 600 975 740 1045 830 1020 950 1120 1010 1130M1000 0L1140 160 1240 300 1260 400 1275 560 1260 750 1275 900 1272 1130M1385 0L1380 120 1360 250 1370 380 1330 480M1190 0V130L1260 170M1150 90L1260 160M1270 260L1310 270 1330 340V460M1310 925L1350 945 1400 920 1460 915 1510 885 1568 890M180 960L160 1050 180 1130M0 1000L60 1070 80 1130M1450 150L1500 135 1568 145',
    border: 'M75 0L80 30 100 70 140 70 150 40 190 30 210 0M290 0L310 30 320 65 370 35 430 25 460 0M880 0L870 20 910 40 940 80 970 105 1080 102M1100 0L1110 20 1160 10',
  },
];

// minor streets that run across tiles
const LANES =
  'M10 240L60 300M30 232L90 290M0 270L70 262M15 320L90 305M100 245L85 320M70 110V200M150 190V260M165 250H230M180 270V330M205 150V185M225 110V190M240 170H280M300 150L345 172M385 40L420 90M410 28V110M430 60H510M440 30L470 95M465 25L455 110M485 60L470 120M440 130L520 118M470 140L495 230M490 150L530 240M455 170L530 160M460 190L560 178M480 215L570 200M500 240L560 225M520 170L500 260M545 165L530 270M560 180L555 280M440 250L500 262 560 250M450 280L510 270 570 285M470 245L465 330M500 262L490 340M530 255L525 320M480 300L560 310M575 250L640 262M590 230L600 290M620 225L615 300M650 235L660 290M680 240L690 300M570 275L700 285M600 180L590 225M640 190L630 235M670 205L665 250M600 20L580 60M620 15L660 70M590 45L640 75M650 70L640 115M670 75L680 130M700 70L705 150M725 60L720 150M745 75L735 160M690 110L770 100M680 140L760 130M770 80L790 150M800 70L795 110M810 30L860 38M820 10L815 70M840 60L835 110M860 60V100M880 10L885 70M905 20L900 75M920 30L925 80M940 55L935 105M955 20L960 75M970 10L975 85M900 100L980 115M1060 90L1110 110M1080 60L1085 130M1100 60L1095 140M1050 130L1120 150M1060 160L1110 175M1040 190L1090 200M950 200L1010 215M960 225L1030 235M975 195L965 250M1000 200L1010 260M1030 190L1035 250M60 400L100 430M80 395L130 440M110 400L90 470M140 420L170 470M170 400L180 440M205 410L190 470M225 395L215 460M150 480L130 520M180 460L160 510M100 480L150 500M50 440L30 500M70 455L60 520M290 420L330 430M300 470L350 480M330 400L325 500M270 560L310 620M300 560L340 600M320 620L380 640M340 580L400 600M440 680L500 690M460 690L455 745M490 680V745M520 690L515 745M580 380L590 400M30 130L35 190M120 240L115 330M60 340L150 350M0 345L50 380M20 400L70 410M180 10L200 40M230 10L240 45M360 10L375 60M340 40L400 50M330 80L390 95M350 100L440 120M340 60L330 130';

const ROUTE =
  'M110 463L126 475M98 509L126 475L538 97L537 112L528 131L516 136L518 153L855 213L883 301L1033 498L1030 573L1025 610L1016 648Q1015 652 1005 650M524 130Q520 134 525 126L534 116';

type LayerKey = Exclude<keyof Tile, 'x' | 'y'>;

// draws one kind of feature over all tiles, so filters do not break at tile edges
function Layer({ of, filter, ...style }: { of: LayerKey; filter?: string } & React.SVGProps<SVGPathElement>) {
  return (
    <g filter={filter} fill="none" strokeLinejoin="round">
      {TILES.map((t, i) => (
        <path key={i} d={t[of]} transform={`translate(${t.x} ${t.y}) scale(0.359 0.3333)`} {...style} />
      ))}
    </g>
  );
}

function RouteMap() {
  return (
    <svg viewBox="0 0 1125 750" className="block w-full h-auto bg-[#e3e3e1]" role="img" aria-label="Route map">
      <defs>
        <filter id="ragged" filterUnits="userSpaceOnUse" x="-20" y="-20" width="1165" height="790">
          <feTurbulence type="fractalNoise" baseFrequency="0.05" numOctaves="4" seed="4" result="noise" />
          <feDisplacementMap in="SourceGraphic" in2="noise" scale="42" xChannelSelector="R" yChannelSelector="G" />
          <feGaussianBlur stdDeviation="1.2" />
        </filter>
        <filter id="softer" filterUnits="userSpaceOnUse" x="-20" y="-20" width="1165" height="790">
          <feTurbulence type="fractalNoise" baseFrequency="0.03" numOctaves="3" seed="9" result="noise" />
          <feDisplacementMap in="SourceGraphic" in2="noise" scale="40" xChannelSelector="R" yChannelSelector="G" />
          <feGaussianBlur stdDeviation="3.5" />
        </filter>
        <path id="river" d="M632 134 Q655 142 680 170 Q705 196 745 205 Q770 208 788 192 L870 110" />
      </defs>
      <Layer of="forest" filter="url(#softer)" fill="#cfdcc6" stroke="#d6dfd0" strokeWidth="44" />
      <Layer of="forest" filter="url(#ragged)" fill="#acd292" stroke="#acd292" strokeWidth="12" />
      <Layer of="shade" filter="url(#softer)" fill="#a0c58b" />
      <Layer of="meadow" filter="url(#softer)" fill="#d3dec8" />
      <path d={LANES} fill="none" stroke="#fafbfa" strokeWidth="3" strokeLinejoin="round" />
      <Layer of="water" fill="#90bad9" fillRule="evenodd" />
      <Layer of="stream" stroke="#8fc1e4" strokeWidth="9" />
      <Layer of="street" stroke="#d9dcda" strokeWidth="14" />
      <Layer of="street" stroke="#fcfdfc" strokeWidth="10" />
      <Layer of="highway" stroke="#ecedee" strokeWidth="22" />
      <Layer of="highway" stroke="#c6c7ca" strokeWidth="16" />
      <Layer of="border" stroke="#dedaea" strokeWidth="28" opacity="0.85" />
      <Layer of="border" stroke="#b9a8bd" strokeWidth="11" strokeDasharray="56 18" />

      {/* bridges */}
      <path d="M577 76L571 92M604 108L595 123M875 117V133M922 136L919 147M991 154L999 168M1013 124L1027 141M1033 103L1044 108M845 120L838 133M1073 28L1080 38" stroke="#fdfdfd" strokeWidth="3" />

      <g className="font-[Roboto,sans-serif] italic" fontWeight="500" fill="#3f86d9" stroke="#e8f1f8" strokeWidth="3" paintOrder="stroke">
        <text fontSize="41">
          <textPath href="#river">Hangang River</textPath>
        </text>
        <text fontSize="36" transform="translate(72 738) rotate(10)">Sihwa Lake</text>
      </g>

      <g className="font-[Inter,sans-serif]" fontWeight="600" fill="#333" stroke="#f4f4f2" strokeWidth="4" paintOrder="stroke">
        <text x="679" y="60" fontSize="44" fontWeight="700">SEOUL</text>
        <text x="222" y="231" fontSize="41">Bucheon</text>
        <text x="102" y="352" fontSize="41">Incheon</text>
        <text x="385" y="706" fontSize="41">Ansan</text>
        <text x="962" y="447" fontSize="41">Seongnam</text>
      </g>

      <path d={ROUTE} fill="none" stroke="#fff" strokeWidth="13" strokeLinecap="round" strokeLinejoin="round" opacity="0.6" />
      <circle cx="93" cy="513" r="5" fill="#303030" />
      <circle cx="1001" cy="650" r="4" fill="#303030" />
      <path d={ROUTE} fill="none" stroke="#eb6c34" strokeWidth="8" strokeLinecap="round" strokeLinejoin="round" />

      <text x="75" y="737" fontSize="20" fill="#fff" opacity="0.85" className="font-[Roboto,sans-serif]">
        © OpenMapTiles © OpenStreetMap
      </text>
    </svg>
  );
}

/* ---------- feed ---------- */

interface ActivityHeaderProps {
  name: string;
  date?: string;
  place: string;
}

function ActivityHeader({ name, date, place }: ActivityHeaderProps) {
  return (
    <div className="flex items-start gap-9 px-[72px] pt-[72px]">
      <div className="w-36 h-36 rounded-full bg-[#204c41] text-white text-[80px] flex items-center justify-center shrink-0">K</div>
      <div className="min-w-0">
        <h2 className="text-[38px] leading-[52px] font-bold">{name}</h2>
        <p className="mt-1 min-h-[60px] text-[33px] leading-[60px] text-[#444441]">{date}</p>
        <p className="flex items-center gap-3 text-[33px] leading-[52px] text-[#444441]">
          <span className="text-black"><ShoeIcon /></span>
          {place}
        </p>
      </div>
    </div>
  );
}

function ActivityActions() {
  return (
    <div className="grid grid-cols-3 justify-items-center h-[228px] shrink-0 pt-[82px] items-start">
      <button aria-label="Give kudos"><ThumbIcon /></button>
      <button aria-label="Comment"><CommentIcon /></button>
      <button aria-label="Share"><ShareIcon /></button>
    </div>
  );
}

const STATS = [
  { label: 'Distance', value: '6.83 km' },
  { label: 'Pace', value: '10:06 /km' },
  { label: 'Time', value: '1h 9m' },
];

const TABS = [
  { label: 'Progress' },
  { label: 'Workouts', dot: true },
  { label: 'Activities', active: true },
];

const NAV = [
  { label: 'Home', icon: HomeIcon },
  { label: 'Maps', icon: MapsIcon },
  { label: 'Record', icon: RecordIcon },
  { label: 'Groups', icon: GroupsIcon },
  { label: 'You', icon: YouIcon, active: true },
];

function StatusBar() {
  return (
    <div className="flex items-center justify-between h-[153px] pl-[131px] pr-[92px] font-[Inter,sans-serif]">
      <div className="flex items-center gap-3">
        <span className="text-[48px] leading-none font-bold">4:16</span>
        <LocationIcon />
      </div>
      <div className="flex items-center">
        <SignalIcon />
        <span className="ml-5 text-[37px] leading-none font-bold font-['Open_Sans',sans-serif]">LTE</span>
        <div className="ml-5 w-[74px] h-[39px] rounded-[13px] bg-linear-to-r from-black from-55% to-[#b2b2b2] to-55% text-white text-[34px] leading-none font-bold flex items-center justify-center">
          57
        </div>
        <div className="ml-[3px] w-1 h-[13px] rounded-r-full bg-[#b2b2b2]" />
      </div>
    </div>
  );
}

function Header() {
  return (
    <header className="bg-white">
      <StatusBar />
      <div className="flex items-center pl-[60px] pr-12">
        <div className="w-[120px] h-[120px] rounded-full bg-[#204c41] text-white text-[66px] flex items-center justify-center">K</div>
        <h1 className="flex-1 text-center text-[50px] leading-none font-bold">You</h1>
        <div className="flex gap-9 pl-[66px]">
          {[PlusCircleIcon, GearIcon].map((Icon, i) => (
            <button
              key={i}
              aria-label={i === 0 ? 'Add' : 'Settings'}
              className="w-[132px] h-[132px] rounded-full bg-[#fdfdfd] border-3 border-white shadow-[0_24px_120px_rgba(0,0,0,0.10)] flex items-center justify-center"
            >
              <Icon />
            </button>
          ))}
        </div>
      </div>
      <nav className="relative grid grid-cols-3 h-[196px] px-[72px] border-b-3 border-[#dedede]">
        {TABS.map((tab) => (
          <button
            key={tab.label}
            className={cn(
              'flex items-center justify-center pt-7 -mb-[3px] text-[49px] leading-none font-bold text-[#65655e] border-b-6 border-transparent',
              tab.active && 'text-black border-[#e95f2b]'
            )}
          >
            <span className="relative">
              {tab.label}
              {tab.dot && <span className="absolute left-full top-1/2 -translate-y-1/2 ml-6 w-6 h-6 rounded-full bg-[#cf3a34]" />}
            </span>
          </button>
        ))}
      </nav>
    </header>
  );
}

function BottomNav() {
  return (
    <nav className="fixed inset-x-[63px] bottom-[63px] h-[186px] rounded-full bg-white/75 backdrop-blur-[3px] shadow-[0_24px_108px_rgba(0,0,0,0.19)]">
      {/* refraction of the avatar below the glass */}
      <div className="absolute inset-0 rounded-full overflow-hidden">
        <svg viewBox="0 0 180 186" className="h-full w-[180px]">
          <defs>
            <filter id="glass"><feGaussianBlur stdDeviation="3" /></filter>
          </defs>
          <rect width="170" height="186" fill="#fff" />
          <g filter="url(#glass)">
            <path d="M130 0 Q60 4 34 32 Q12 56 18 80 Q24 98 44 88 Q80 70 118 88 Q148 108 153 150 Q156 178 134 184 L60 190 L-10 140 V20 L40 -10 H130Z" fill="#dbf0ec" />
            <path d="M38 152 Q54 150 64 124M78 140 Q72 160 92 176" fill="none" stroke="#f2faf9" strokeWidth="9" />
            <path d="M100 106 Q146 108 150 160 Q120 180 92 158 Q84 130 100 106Z" fill="#e6f5f2" />
          </g>
        </svg>
      </div>
      <div className="absolute inset-0 rounded-full border-2 border-white" />
      <div className="relative grid grid-cols-5 h-full px-7 py-3">
        {NAV.map(({ label, icon: Icon, active }) => (
          <a
            key={label}
            href="#"
            className={cn(
              'flex flex-col items-center pt-6 text-[32px] leading-[44px] font-bold text-[#1a1a1a]',
              active && 'text-[#e05526] bg-[#ebebeb] rounded-full -mx-4'
            )}
          >
            <Icon />
            <span>{label}</span>
          </a>
        ))}
      </div>
    </nav>
  );
}

export default function App() {
  return (
    <div className="relative min-h-screen bg-white text-black font-[Roboto,sans-serif]">
      <Header />

      <main>
        {/* tail of the previous activity */}
        <div className="flex flex-col justify-end h-[84px] overflow-hidden">
          <ActivityActions />
        </div>
        <div className="h-[9px] bg-[#f2f2f0]" />

        <article>
          <ActivityHeader name="Jaehoon Kim" date="September 3, 2026 at 1:55 PM · Strava App" place="Suji-gu, Gyeonggi" />
          <div className="px-[72px] pb-[70px]">
            <h3 className="mt-[76px] text-[61px] leading-[72px] font-bold">Afternoon Run</h3>
            <dl className="mt-[51px] flex gap-[72px]">
              {STATS.map((s) => (
                <div key={s.label}>
                  <dt className="text-[33px] leading-[48px] text-[#444441]">{s.label}</dt>
                  <dd className="mt-1 text-[52px] leading-[72px] font-bold">{s.value}</dd>
                </div>
              ))}
            </dl>
          </div>
          <div className="relative">
            <RouteMap />
            <span className="absolute top-12 left-12 px-3 rounded-md bg-white text-[34px] leading-[51px] font-bold">Start hidden</span>
          </div>
          <ActivityActions />
        </article>
        <div className="h-[9px] bg-[#f2f2f0]" />

        <article className="relative">
          <ActivityHeader name="Jaehoon Kim" place="Bundang-gu, Gyeonggi" />
          <div className="absolute inset-0 bg-linear-to-b from-white/0 via-white/75 via-40% to-white/80" />
        </article>
      </main>

      <BottomNav />
    </div>
  );
}
